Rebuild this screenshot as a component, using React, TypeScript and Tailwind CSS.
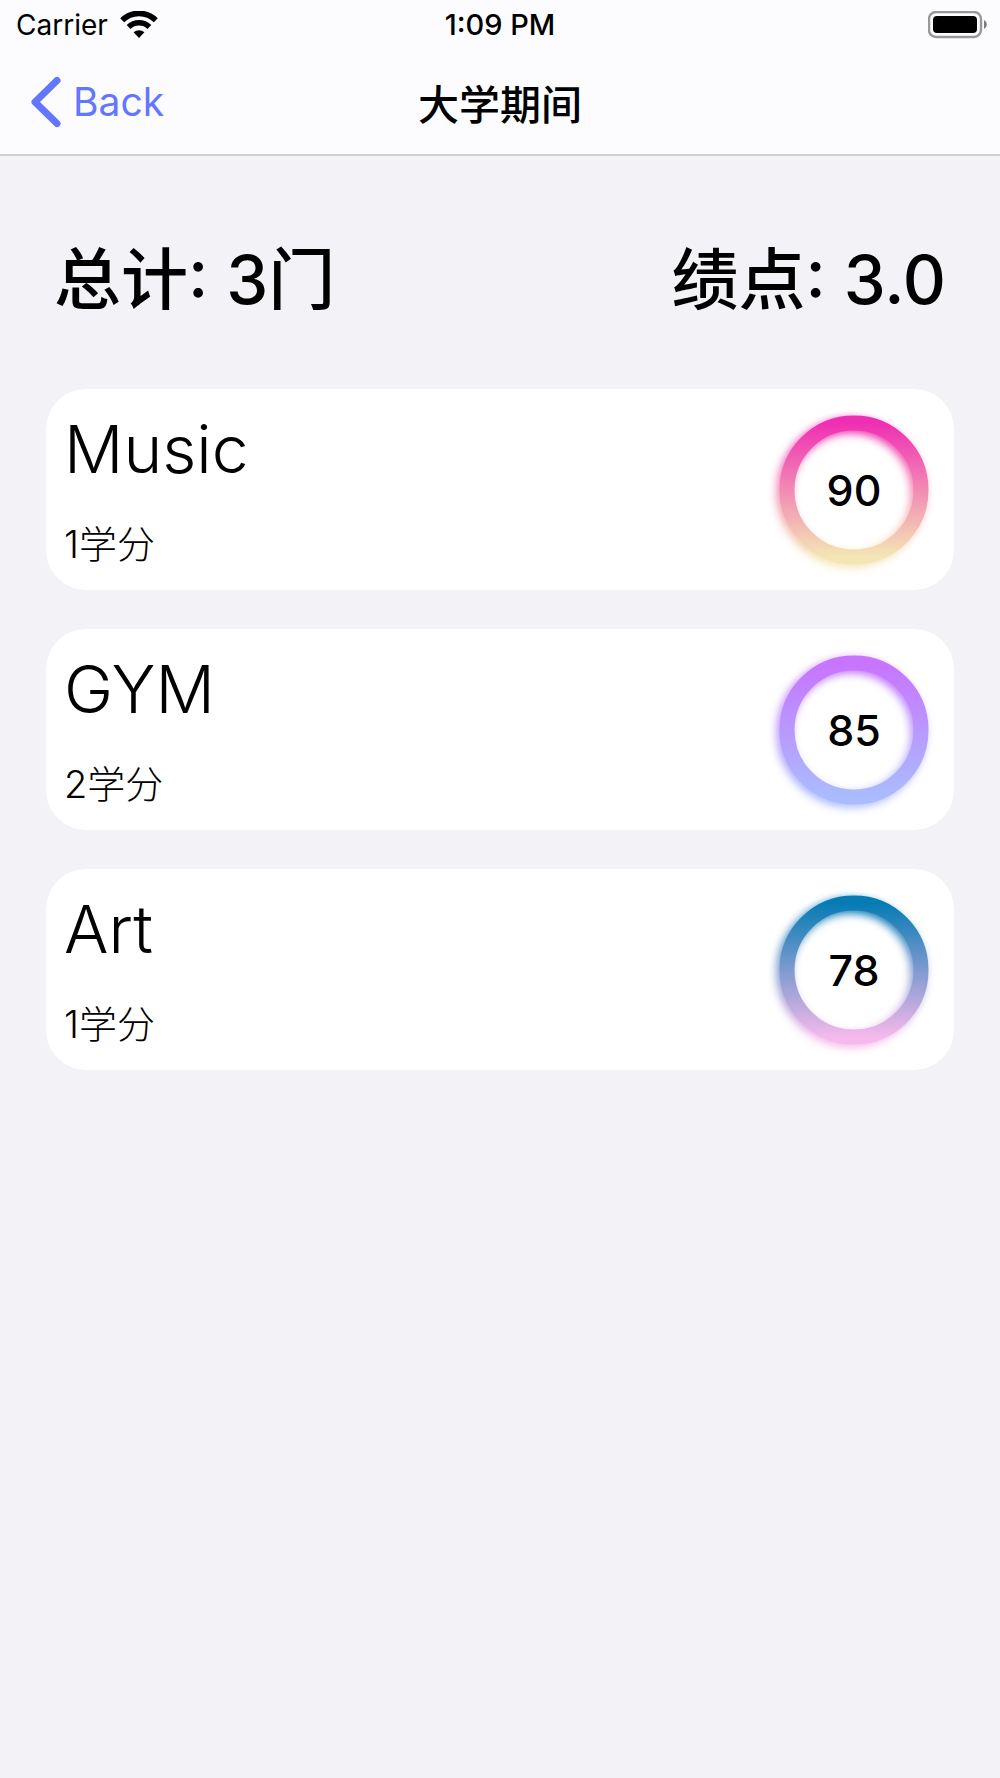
interface Course {
  name: string
  credit: number
  score: number
  from: string
  to: string
}

const courses: Course[] = [
  { name: 'Music', credit: 1, score: 90, from: '#ef2fb3', to: '#f4e6b4' },
  { name: 'GYM', credit: 2, score: 85, from: '#c874ff', to: '#aabcfd' },
  { name: 'Art', credit: 1, score: 78, from: '#067bb4', to: '#f5b9eb' },
]

function WifiIcon() {
  return (
    <svg width="38" height="28" viewBox="0 0 38 28" fill="none" stroke="black" aria-hidden="true">
      <path d="M2.2 9.2 A24 24 0 0 1 35.8 9.2" strokeWidth="5.6" />
      <path d="M8.6 16 A15 15 0 0 1 29.4 16" strokeWidth="5.4" />
      <path d="M13.6 21.3 A8 8 0 0 1 24.4 21.3 L19 27 Z" fill="black" stroke="none" />
    </svg>
  )
}

function BatteryIcon() {
  return (
    <svg width="60" height="28" viewBox="0 0 60 28" aria-hidden="true">
      <rect x="1" y="1" width="52" height="25" rx="7" fill="none" stroke="#98989a" strokeWidth="2.4" />
      <rect x="5" y="5" width="44" height="17" rx="4" fill="black" />
      <path d="M56 9 A5 5 0 0 1 56 18 Z" fill="#7d7d7f" />
    </svg>
  )
}

function Ring({ score, from, to }: { score: number; from: string; to: string }) {
  const id = `ring-${score}`
  return (
    <div className="grid size-[150px] shrink-0 place-items-center">
      <svg className="col-start-1 row-start-1 size-full overflow-visible" viewBox="0 0 150 150" fill="none" aria-hidden="true">
        <defs>
          <linearGradient id={id} gradientUnits="userSpaceOnUse" x1="75" y1="8" x2="75" y2="142">
            <stop offset="0" stopColor={from} />
            <stop offset="1" stopColor={to} />
          </linearGradient>
          <filter id={`${id}-glow`} x="-20%" y="-20%" width="140%" height="140%" colorInterpolationFilters="sRGB">
            <feGaussianBlur stdDeviation="4" />
          </filter>
        </defs>
        {/* glow, shifted to the lower left */}
        <circle cx="72" cy="78" r="67" stroke={`url(#${id})`} strokeWidth="15" filter={`url(#${id}-glow)`} />
        <circle cx="75" cy="75" r="67" stroke={`url(#${id})`} strokeWidth="15" />
      </svg>
      <span className="col-start-1 row-start-1 text-[43px] leading-none font-medium">{score}</span>
    </div>
  )
}

function CourseCard({ course }: { course: Course }) {
  return (
    <li className="flex items-center justify-between rounded-[40px] bg-white pt-[26px] pr-[25px] pb-[25px] pl-[18px]">
      <div className="flex flex-col gap-10">
        <h2 className="text-[66px] leading-[68px] font-light">{course.name}</h2>
        <p className="text-[38px] leading-[42px] font-light">{course.credit}学分</p>
      </div>
      <Ring score={course.score} from={course.from} to={course.to} />
    </li>
  )
}

export default function App() {
  return (
    <div className="min-h-screen bg-[#f2f2f7] font-['Inter','Noto_Sans_CJK_SC',sans-serif] text-black">
      <header className="border-b-2 border-[#d0d0d3] bg-[#fcfcfe]">
        <div className="grid h-[50px] grid-cols-[1fr_auto_1fr] items-center px-3">
          <div className="flex items-center gap-3 pl-1 text-[28px]">
            <span>Carrier</span>
            <WifiIcon />
          </div>
          <time className="text-center text-[29px] font-medium">1:09 PM</time>
          <div className="flex justify-end">
            <BatteryIcon />
          </div>
        </div>
        <nav className="grid h-[104px] grid-cols-[1fr_auto_1fr] items-center px-[30px]">
          <button type="button" className="flex items-center gap-3 text-[39px] text-[#6276ff]">
            <svg width="31" height="52" viewBox="0 0 31 52" fill="none" stroke="currentColor" strokeWidth="7" strokeLinecap="round" strokeLinejoin="round" aria-hidden="true">
              <path d="M27 4.5 L5 26 L27 47.5" />
            </svg>
            Back
          </button>
          <h1 className="text-center font-['Noto_Sans_CJK_SC',sans-serif] text-[41px] leading-[60px] font-medium">大学期间</h1>
        </nav>
      </header>

      <main className="px-[46px]">
        <div className="flex items-center justify-between px-2 pt-[75px] pb-[60px] text-[67px] leading-[98px] font-medium">
          <span>总计: 3门</span>
          <span>绩点: 3.0</span>
        </div>
        <ul className="flex flex-col gap-[39px]">
          {courses.map((course) => (
            <CourseCard key={course.name} course={course} />
          ))}
        </ul>
      </main>
    </div>
  )
}
